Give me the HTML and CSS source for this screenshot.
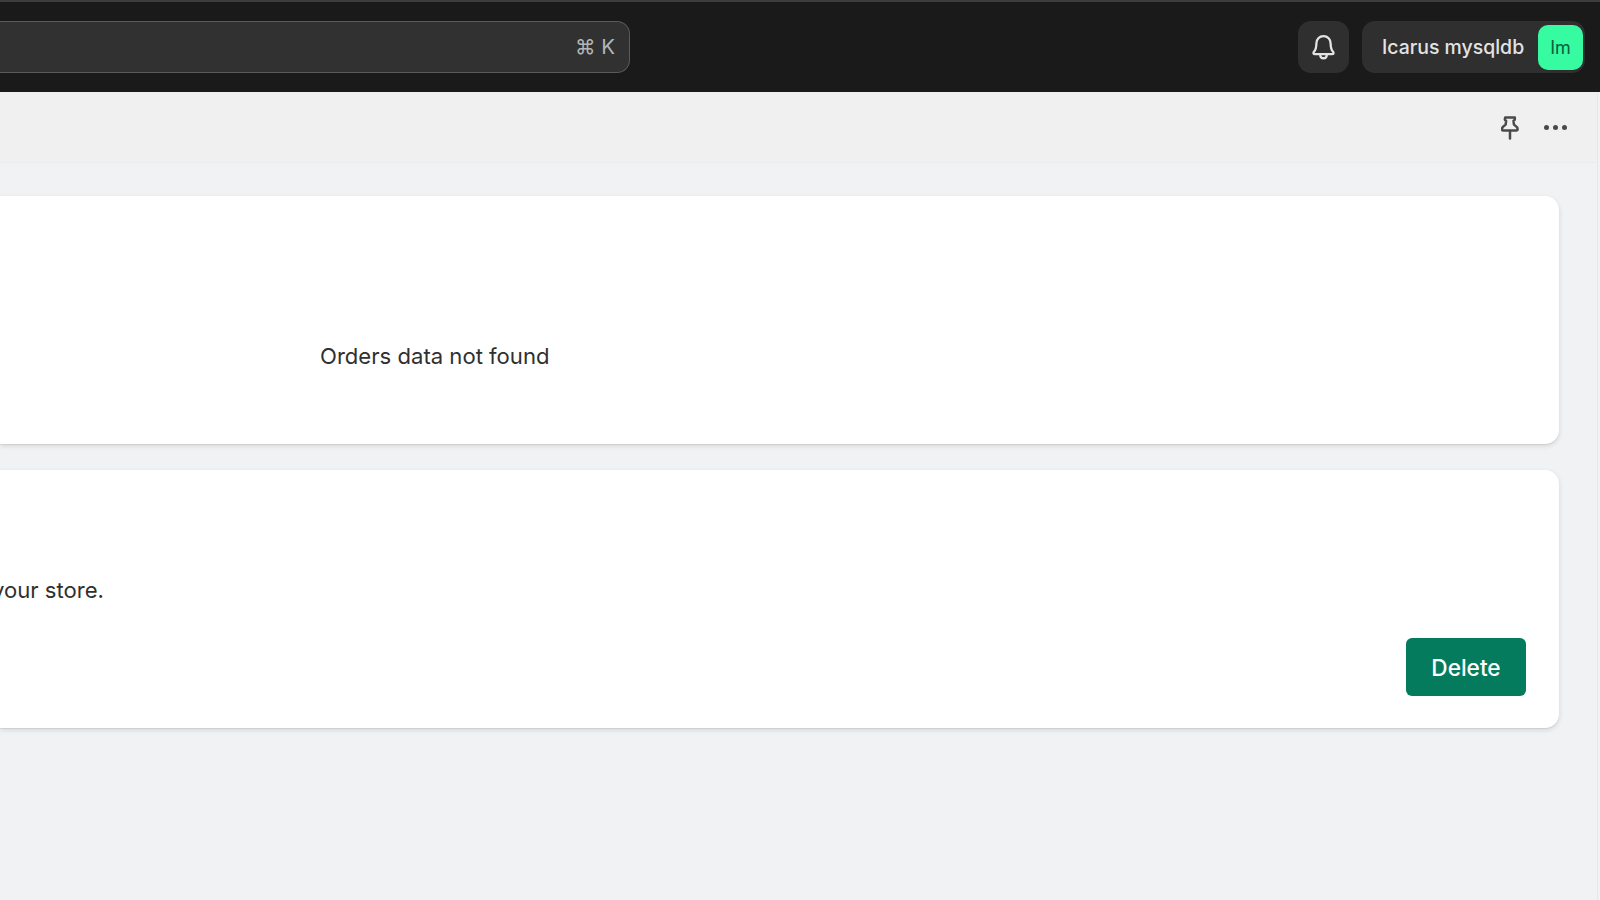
FILE: index.html
```html
<!DOCTYPE html>
<html lang="en">
<head>
<meta charset="utf-8">
<title>Store settings</title>
<link rel="stylesheet" href="styles.css">
</head>
<body>
<header class="topbar">
  <div class="search"><span class="search-keys">⌘ K</span></div>
  <div class="topbar-actions">
    <button class="bell-btn" aria-label="Notifications">
      <svg class="bell" viewBox="0 0 24 24" fill="none" stroke="currentColor" stroke-width="1.9" stroke-linejoin="round" stroke-linecap="round"><path d="M12 2.6c-3.5 0-5.900 2.700-5.900 6 0 3.700-.6 5.300-2 6.900-.7.8-.6 2 .9 2h14c1.500 0 1.600-1.200.9-2-1.400-1.600-2-3.200-2-6.900 0-3.300-2.400-6-5.900-6z"/><path d="M9.300 17.700c0 1.900 1.200 3.200 2.700 3.200s2.700-1.300 2.700-3.200"/></svg>
    </button>
    <div class="user-pill">
      <span class="user-name">Icarus mysqldb</span>
      <span class="avatar">Im</span>
    </div>
  </div>
</header>
<div class="subheader">
  <svg class="pin" viewBox="0 0 18 24" fill="none" stroke="currentColor" stroke-width="2.500" stroke-linejoin="round" stroke-linecap="round"><path d="M4.200 1.400h9.600v2.200c0 .6-.6 1-1.300 1.200l.4 3.600c.1 1 3.700 1.700 3.700 4.600 0 .9-.5 1.400-1.300 1.400H2.300c-.8 0-1.300-.5-1.300-1.400 0-2.900 3.600-3.600 3.700-4.600l.4-3.600c-.7-.2-1.300-.6-1.300-1.200z"/><path d="M9 15v7.600"/></svg>
  <div class="dots" aria-label="More actions"><i></i><i></i><i></i></div>
</div>
<main class="main">
  <section class="card card-orders">
    <p class="card-text">Orders data not found</p>
  </section>
  <section class="card card-delete">
    <div class="clip"><p class="card-text">Deleting this will remove it from your store.</p></div>
    <div class="card-foot"><button class="delete-btn">Delete</button></div>
  </section>
</main>
</body>
</html>
```

FILE: styles.css
```css
* { box-sizing: border-box; }
html, body { margin: 0; height: 100%; }
body {
  width: 1600px;
  height: 900px;
  overflow: hidden;
  background: #f1f2f4;
  font-family: Inter, "Liberation Sans", sans-serif;
  color: #222;
}
.topbar {
  height: 92px;
  background: #1a1a1a;
  border-top: 2px solid #3d3d3d;
  display: flex;
  align-items: center;
  justify-content: space-between;
  padding-right: 15px;
}
.search {
  width: 630px;
  height: 52px;
  background: #313131;
  border: 1px solid #5a5a5a;
  border-left: 0;
  border-radius: 0 13px 13px 0;
  display: flex;
  align-items: center;
  justify-content: flex-end;
  padding-right: 14px;
}
.search-keys {
  font-family: Inter, "DejaVu Sans", sans-serif;
  font-size: 20.500px;
  color: #b5b5b5;
  margin-top: -1px;
}
.topbar-actions { display: flex; align-items: center; gap: 13px; }
.bell-btn {
  width: 51px;
  height: 52px;
  border: 0;
  padding: 0;
  border-radius: 13px;
  background: #2f2f2f;
  color: #e3e3e3;
  display: flex;
  align-items: center;
  justify-content: center;
}
.bell { width: 29px; height: 29px; }
.user-pill {
  width: 223px;
  height: 52px;
  border-radius: 13px;
  background: #2f2f2f;
  display: flex;
  align-items: center;
  justify-content: space-between;
  padding: 0 2px 0 20px;
}
.user-name { font-size: 19.450px; font-weight: 500; color: #e3e3e3; white-space: nowrap; margin-top: -1px; }
.avatar {
  width: 45px;
  height: 45px;
  border-radius: 10px;
  background: #36fba1;
  color: #07603c;
  font-size: 18px;
  display: flex;
  align-items: center;
  justify-content: center;
}
.subheader {
  height: 71px;
  background: #f0f0f0;
  border-bottom: 1px solid #ececec;
  border-right: 1px solid #e6e7e9;
  display: flex;
  align-items: center;
  justify-content: flex-end;
  gap: 25px;
  padding-right: 30px;
  margin-right: 2px;
}
.pin { width: 18px; height: 24px; margin-top: 2px; color: #4a4a4a; }
.dots { display: flex; gap: 4px; width: 23px; }
.dots i { width: 5px; height: 5px; border-radius: 50%; background: #4a4a4a; }
.main {
  height: 738px;
  margin-right: 2px;
  border-right: 1px solid #e6e7e9;
  padding: 33px 38px 0 0;
  display: flex;
  flex-direction: column;
  gap: 26px;
}
.card {
  background: #fff;
  border-radius: 0 14px 14px 0;
  box-shadow: 0 1px 0 rgba(26, 26, 26, 0.07), 0 2px 5px rgba(26, 26, 26, 0.13);
}
.card-orders { height: 248px; padding: 144px 0 0 320px; }
.card-delete { height: 258px; padding-top: 104px; }
.card-text { margin: 0; font-size: 22.100px; line-height: 32px; white-space: nowrap; color: #303030; }
.clip { width: 104px; overflow: hidden; display: flex; justify-content: flex-end; }
.card-foot { display: flex; justify-content: flex-end; padding: 32px 33px 0 0; }
.delete-btn {
  width: 120px;
  height: 58px;
  border: 0;
  border-radius: 6px;
  background: #047b5d;
  color: #fff;
  font: 500 22.600px Inter, "Liberation Sans", sans-serif;
}
```
